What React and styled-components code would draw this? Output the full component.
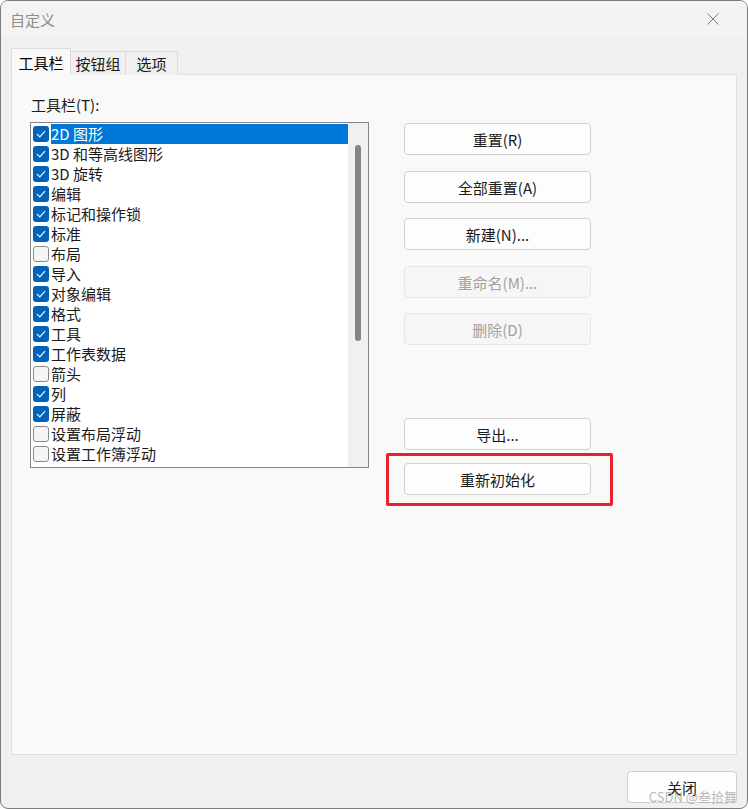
import React from 'react';
import styled, { createGlobalStyle, css } from 'styled-components';

const GlobalStyle = createGlobalStyle`
  html, body {
    margin: 0;
    padding: 0;
    background: #ffffff;
  }
  body {
    font-family: "Noto Sans CJK SC", "Noto Sans", "Liberation Sans", sans-serif;
    font-size: 15px;
    color: #1a1a1a;
  }
`;

const Window = styled.div`
  position: relative;
  box-sizing: border-box;
  width: 748px;
  height: 809px;
  border: 1px solid #7d7d7d;
  border-radius: 8px;
  background: #f0f0f0;
  overflow: hidden;
  display: flex;
  flex-direction: column;
`;

const TitleBar = styled.div`
  height: 36px;
  flex: none;
  display: flex;
  align-items: center;
  justify-content: space-between;
  padding: 0 28px 0 9px;
  background: #f3f3f3;
`;

const Title = styled.span`
  font-size: 15px;
  color: #8c8c8c;
`;

const Body = styled.div`
  flex: 1;
  display: flex;
  flex-direction: column;
  padding: 11px 10px 0 10px;
`;

const TabStrip = styled.div`
  display: flex;
  align-items: flex-end;
  height: 27px;
  position: relative;
  z-index: 1;
  margin-bottom: -1px;
`;

const Tab = styled.div`
  box-sizing: border-box;
  width: ${p => p.$w}px;
  display: flex;
  align-items: center;
  justify-content: center;
  font-size: 15px;
  border: 1px solid #dcdcdc;
  border-bottom: none;
  ${p => p.$active ? css`
    height: 27px;
    background: #f9f9f9;
    color: #000;
  ` : css`
    height: 24px;
    margin-left: -1px;
    background: #f0f0f0;
    color: #1a1a1a;
  `}
`;

const Panel = styled.div`
  box-sizing: border-box;
  height: 681px;
  background: #f9f9f9;
  border: 1px solid #e0e0e0;
  padding: 20px 18px 0 18px;
`;

const Label = styled.div`
  height: 20px;
  line-height: 20px;
  padding-left: 1px;
  margin-bottom: 7px;
`;

const Columns = styled.div`
  display: flex;
  gap: 35px;
`;

const ListBox = styled.div`
  box-sizing: border-box;
  width: 339px;
  height: 346px;
  border: 1px solid #858591;
  background: #ffffff;
  display: flex;
  padding: 1px 0 0 0;
`;

const Items = styled.div`
  flex: 1;
  display: flex;
  flex-direction: column;
`;

const Row = styled.div`
  height: 20px;
  display: flex;
  align-items: center;
`;

const Check = styled.span`
  box-sizing: border-box;
  width: 16px;
  height: 16px;
  margin: 0 2px 0 2px;
  border-radius: 3px;
  display: flex;
  align-items: center;
  justify-content: center;
  flex: none;
  ${p => p.$on ? css`
    background: #0063b9;
  ` : css`
    background: #f4f4f4;
    border: 1px solid #8a8a8a;
  `}
`;

const ItemText = styled.span`
  flex: 1;
  height: 20px;
  line-height: 20px;
  font-size: 15px;
  white-space: nowrap;
  ${p => p.$selected && css`
    background: #0078d7;
    color: #ffffff;
  `}
`;

const ScrollTrack = styled.div`
  width: 20px;
  flex: none;
  margin-top: -1px;
  background: #f0f0f0;
  display: flex;
  justify-content: center;
  padding-top: 22px;
  box-sizing: border-box;
`;

const ScrollThumb = styled.div`
  width: 6px;
  height: 196px;
  background: #858585;
  border-radius: 3px;
`;

const ButtonColumn = styled.div`
  display: flex;
  flex-direction: column;
  padding-top: 1px;
`;

const Button = styled.button`
  box-sizing: border-box;
  width: ${p => p.$w || 187}px;
  height: 32px;
  border-radius: 4px;
  font-family: inherit;
  font-size: 15px;
  margin-top: ${p => p.$mt || 0}px;
  padding: 0;
  ${p => p.disabled ? css`
    background: #f6f6f6;
    border: 1px solid #e6e6e6;
    color: #a0a0a0;
  ` : css`
    background: #fdfdfd;
    border: 1px solid #d0d0d0;
    color: #1a1a1a;
  `}
`;

const Marked = styled.div`
  position: relative;
  margin-top: 13px;
`;

const Highlight = styled.div`
  position: absolute;
  left: -18px;
  right: -22px;
  top: -10px;
  bottom: -11px;
  border: 3px solid #e8222b;
  border-radius: 2px;
  pointer-events: none;
`;

const Footer = styled.div`
  display: flex;
  justify-content: flex-end;
  padding-top: 16px;
`;

const Watermark = styled.div`
  position: absolute;
  right: 10px;
  bottom: 2px;
  font-size: 13px;
  color: rgba(160, 160, 160, 0.75);
  pointer-events: none;
`;

const items = [
  ['2D 图形', true],
  ['3D 和等高线图形', true],
  ['3D 旋转', true],
  ['编辑', true],
  ['标记和操作锁', true],
  ['标准', true],
  ['布局', false],
  ['导入', true],
  ['对象编辑', true],
  ['格式', true],
  ['工具', true],
  ['工作表数据', true],
  ['箭头', false],
  ['列', true],
  ['屏蔽', true],
  ['设置布局浮动', false],
  ['设置工作簿浮动', false],
];

const Tick = () => (
  <svg width="12" height="12" viewBox="0 0 12 12">
    <path d="M2.2 6.3 L4.8 8.8 L9.8 3.4" fill="none" stroke="#ffffff" strokeWidth="1.1" strokeLinecap="round" strokeLinejoin="round" />
  </svg>
);

const CloseIcon = () => (
  <svg width="12" height="12" viewBox="0 0 12 12">
    <path d="M0.5 0.5 L11.5 11.5 M11.5 0.5 L0.5 11.5" stroke="#7a7a7a" strokeWidth="1" />
  </svg>
);

export default function App() {
  return (
    <>
      <GlobalStyle />
      <Window>
        <TitleBar>
          <Title>自定义</Title>
          <CloseIcon />
        </TitleBar>
        <Body>
          <TabStrip>
            <Tab $active $w={60}>工具栏</Tab>
            <Tab $w={56}>按钮组</Tab>
            <Tab $w={53}>选项</Tab>
          </TabStrip>
          <Panel>
            <Label>工具栏(T):</Label>
            <Columns>
              <ListBox>
                <Items>
                  {items.map(([name, on], i) => (
                    <Row key={name}>
                      <Check $on={on}>{on && <Tick />}</Check>
                      <ItemText $selected={i === 0}>{name}</ItemText>
                    </Row>
                  ))}
                </Items>
                <ScrollTrack>
                  <ScrollThumb />
                </ScrollTrack>
              </ListBox>
              <ButtonColumn>
                <Button>重置(R)</Button>
                <Button $mt={16}>全部重置(A)</Button>
                <Button $mt={15}>新建(N)...</Button>
                <Button $mt={16} disabled>重命名(M)...</Button>
                <Button $mt={15} disabled>删除(D)</Button>
                <Button $mt={73}>导出...</Button>
                <Marked>
                  <Button>重新初始化</Button>
                  <Highlight />
                </Marked>
              </ButtonColumn>
            </Columns>
          </Panel>
          <Footer>
            <Button $w={110}>关闭</Button>
          </Footer>
        </Body>
        <Watermark>CSDN @叁拾舞</Watermark>
      </Window>
    </>
  );
}
